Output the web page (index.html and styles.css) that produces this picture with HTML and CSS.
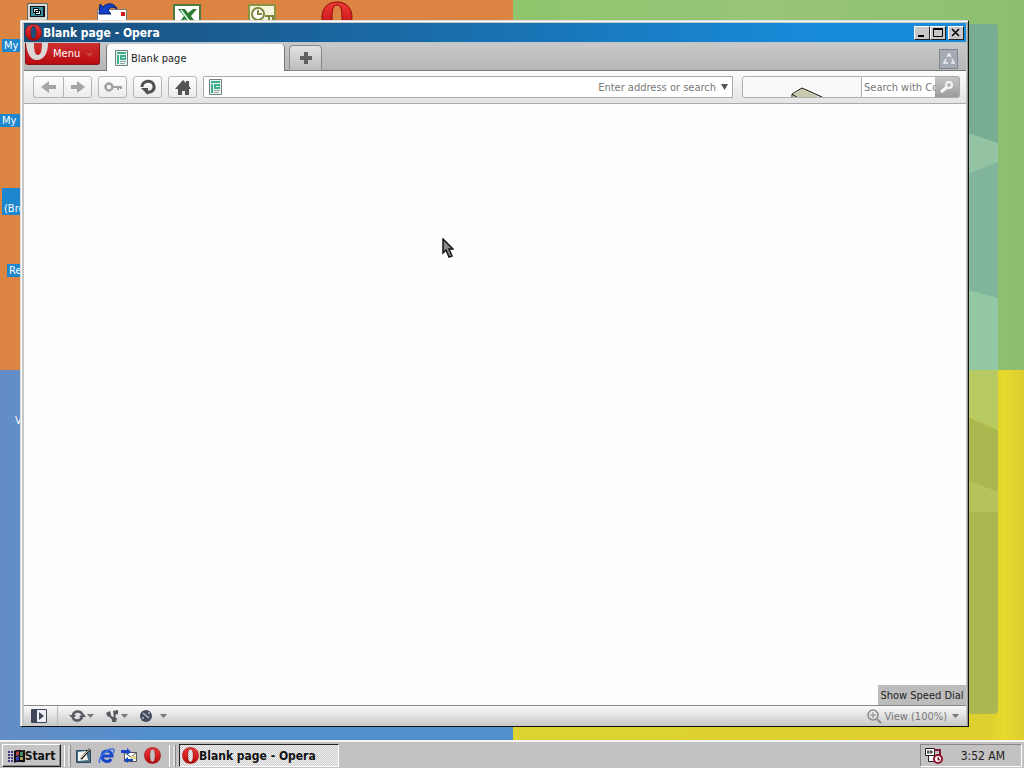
FILE: index.html
```
<!DOCTYPE html>
<html lang="en">
<head>
  <meta charset="UTF-8" />
  <meta name="viewport" content="width=device-width, initial-scale=1.0" />
  <title>Blank page - Opera</title>
  <link rel="stylesheet" href="styles.css">
</head>
<body>
  <!-- shared symbols -->
  <svg class="symbols" aria-hidden="true">
    <defs>
      <linearGradient id="redO" x1="0" y1="0" x2="0" y2="1">
        <stop offset="0" stop-color="#f03a3a" />
        <stop offset="1" stop-color="#b80808" />
      </linearGradient>
    </defs>
    <symbol id="opera" viewBox="0 0 32 32">
      <path fill="url(#redO)" stroke="#8c0808" fill-rule="evenodd" d="M16 1C7 1 1 7 1 16s6 15 15 15 15-6 15-15S25 1 16 1zm0 3c4 0 5 5 5 12s-1 12-5 12-5-5-5-12 1-12 5-12z" />
    </symbol>
    <symbol id="page" viewBox="0 0 13 16">
      <path fill="#e9f5f1" stroke="#71807c" d="M.5.5h12v15H.5z" />
      <path fill="#3fae8f" d="M2 2h9v2H2zM2 5h2v9H2zM5 5h6v5H5z" />
      <path stroke="#d8efe8" d="M7 7.500h3" />
      <path stroke="#8fa8a1" d="M5 11.500h6M5 13.500h5" />
    </symbol>
    <symbol id="caret" viewBox="0 0 7 4"><path fill="currentColor" d="M0 0h7L3.500 4z" /></symbol>
  </svg>

  <main class="desktop">
    <div class="wallpaper">
      <div class="orange"></div>
      <div class="green"></div>
      <div class="blue"></div>
      <div class="yellow"></div>
    </div>
    <div class="glass">
      <svg viewBox="0 0 28 690" preserveAspectRatio="none">
        <path fill="#78ad91" d="M0 0h28v346H0z" />
        <path fill="#94c3a4" d="M0 109l28 10v25L0 170z" />
        <path fill="#82b69c" d="M0 150l28-12v140H0z" />
        <path fill="#94c7a3" d="M0 266l28 8v72H0z" />
        <path fill="#b8cb63" d="M0 346h28v60L0 393z" />
        <path fill="#abb84f" d="M0 393l28 13v284H0z" />
        <path fill="#b7c25a" d="M0 456l28 12v20H0z" />
      </svg>
    </div>

    <div class="icon-row">
      <svg viewBox="0 0 32 22" width="32" height="22">
        <path fill="#d8d8d0" stroke="#666" d="M6.500 2.500h20V21h-20z" /><path fill="#112" d="M9 5h15v11H9z" />
        <path fill="#3f8f9c" d="M10 6h12v9H10z" /><path fill="#dff" stroke="#000" d="M12.500 7.500h5v4h-5zM14.500 9.500h5v4h-5z" />
      </svg>
      <svg viewBox="0 0 32 22" width="32" height="22">
        <path fill="#fff" stroke="#777" d="M1.500 8.500h29V22h-29z" /><path fill="#d01818" d="M25 11h4v4h-4z" />
        <path fill="#1540c8" stroke="#002070" d="M3 13l1-10 3 3c4-5 12-4 14 2-4-3-7-2-9 1l3 4z" />
      </svg>
      <svg viewBox="0 0 32 22" width="32" height="22">
        <path fill="#fff" stroke="#4b7c3c" stroke-width="2" d="M3 4h26v20H3z" />
        <path fill="#2c7a34" d="M7 8h7l3 4 5-4h4l-6 7 6 8h-8l-4-5-4 5H7l6-8z" /><path stroke="#dfe" stroke-width="1.500" d="M10 9l9 12" />
      </svg>
      <svg viewBox="0 0 32 22" width="32" height="22">
        <path fill="#f5f3dc" stroke="#8a9440" stroke-width="2" d="M3 4h26v20H3z" />
        <circle cx="12" cy="13" r="6" fill="#fff" stroke="#7d863c" stroke-width="2" />
        <path fill="none" stroke="#7d863c" stroke-width="2" d="M12 9v4h4M19 15h8v6M23 15v5" />
      </svg>
      <svg viewBox="0 0 32 32" width="32" height="32"><use href="#opera" /></svg>
    </div>

    <span class="label label-docs">My</span>
    <span class="label label-computer">My D</span>
    <span class="label label-network">(Bro</span>
    <span class="label label-recycle">Re</span>
    <span class="label label-media">V</span>

    <section class="window">
      <header class="titlebar">
        <svg width="17" height="17"><use href="#opera" /></svg>
        <h1>Blank page - Opera</h1>
        <div class="window-buttons">
          <button aria-label="Minimize"><svg width="10" height="9"><path d="M1 7h6v2H1z" /></svg></button>
          <button aria-label="Maximize"><svg width="10" height="9"><path fill="none" stroke="#000" d="M.5.5h9v8h-9zM0 1.500h10" /></svg></button>
          <button class="close" aria-label="Close"><svg width="10" height="9"><path stroke="#000" stroke-width="1.500" d="M1 1l7 7M8 1L1 8" /></svg></button>
        </div>
      </header>

      <nav class="tabbar">
        <button class="menu-button">
          <svg width="22" height="18" viewBox="0 0 22 18"><path fill="#dcd8d8" fill-rule="evenodd" d="M0 0h22c0 10-4 17-11 17S1 10 0 0zm8 0c0 8 1 12 4 12s4-5 4-12z" /></svg>
          <span>Menu</span>
          <svg class="menu-caret" width="7" height="4"><use href="#caret" /></svg>
        </button>
        <button class="tab"><svg width="13" height="16"><use href="#page" /></svg>Blank page</button>
        <button class="new-tab" aria-label="New tab"><svg width="12" height="12"><path fill="#606060" d="M4 0h4v4h4v4H8v4H4V8H0V4h4z" /></svg></button>
        <button class="closed-tabs" aria-label="Closed tabs">
          <svg width="12" height="12" fill="none" stroke="#eef0f4" stroke-width="1.500"><path d="M4 4l2-3 2 3M9 6l2 4H8M5 10H1l2-4" /></svg>
        </button>
      </nav>

      <div class="toolbar">
        <div class="pair">
          <button aria-label="Back"><svg width="16" height="14"><path fill="#a5a5a5" d="M0 7l8-6v4h7v4H8v4z" /></svg></button>
          <button aria-label="Forward"><svg width="16" height="14"><path fill="#a5a5a5" d="M15 7L7 1v4H1v4h6v4z" /></svg></button>
        </div>
        <button aria-label="Wand"><svg width="18" height="12"><circle cx="5" cy="6" r="3.500" fill="none" stroke="#a0a0a0" stroke-width="2.500" /><path fill="#a0a0a0" d="M8 5h10v3h-2V7h-1v2h-2V7H8z" /></svg></button>
        <button aria-label="Reload"><svg width="18" height="18"><path fill="none" stroke="#505050" stroke-width="3" d="M3 9c0-7 11-8 12-1 1 5-4 7-8 6" /><path fill="#505050" d="M2 10h7v7z" /></svg></button>
        <button aria-label="Home"><svg width="18" height="17"><path fill="#555" d="M9 1l3 3V2h3v5l2 3h-2v6h-4v-4H8v4H4v-6H1z" /></svg></button>
        <div class="address">
          <svg width="13" height="16"><use href="#page" /></svg>
          <input type="text" aria-label="Address" placeholder="Enter address or search">
          <svg class="drop" width="7" height="6" viewBox="0 0 7 6"><path fill="#555" d="M0 0h7L3.500 6z" /></svg>
        </div>
        <div class="search">
          <div class="widget">
            <svg width="34" height="10"><path fill="#dcdcc4" stroke="#111" d="M2 7L12 1l20 9" /><path fill="#c8c8ae" d="M2 7l10-5 18 9H4z" /><path fill="none" stroke="#111" d="M2 11V7l6 4" /></svg>
          </div>
          <input type="text" aria-label="Search" placeholder="Search with Comcast">
          <button aria-label="Search"><svg width="16" height="16" fill="none" stroke="#f5f5f5" stroke-width="2"><circle cx="10" cy="6" r="3" /><path d="M8 8l-6 5" stroke-width="3" /></svg></button>
        </div>
      </div>

      <div class="page">
        <button class="speed-dial">Show Speed Dial</button>
      </div>

      <footer class="statusbar">
        <button aria-label="Panels"><svg width="16" height="14"><path fill="#eef0f5" stroke="#3f465a" d="M.5.5h15v13H.5z" /><path fill="#3f465a" d="M1 1h5v12H1zM8 3l5 4-5 4z" /></svg></button>
        <span class="divider"></span>
        <button aria-label="Synchronize"><svg width="17" height="14"><path fill="none" stroke="#55585f" stroke-width="2.500" d="M4 6c1-4 7-5 9-1M13 8c-1 4-7 5-9 1" /><path fill="#55585f" d="M0 6h7l-3 4zM10 8h7l-3-4z" /></svg><svg width="7" height="4"><use href="#caret" /></svg></button>
        <button aria-label="Unite"><svg width="15" height="14"><path stroke="#55585f" stroke-width="2" fill="none" d="M3 5l6 6 1-8" /><path fill="#55585f" d="M1 4l4-2 1 4-3 2zM8 2l5-1v4l-4 1zM7 8l5 1-1 4H7z" /></svg><svg width="7" height="4"><use href="#caret" /></svg></button>
        <button class="turbo" aria-label="Turbo"><svg width="14" height="14"><circle cx="7" cy="7" r="6" fill="#454a5c" /><path stroke="#b9bdc9" stroke-width="1.500" d="M4 4l6 5M3 9h2M9 4h2" /></svg><svg width="7" height="4"><use href="#caret" /></svg></button>
        <button class="view"><svg width="15" height="15" fill="none" stroke="#8a8a8a"><circle cx="6" cy="6" r="5" stroke-width="1.500" /><path stroke-width="2" d="M10 10l4 4" /><path d="M3 6h6M6 3v6" /></svg>View (100%)<svg width="7" height="4"><use href="#caret" /></svg></button>
      </footer>
    </section>

    <svg class="cursor" width="12" height="20" viewBox="0 0 12 20"><path fill="#8a8a8a" stroke="#161616" stroke-width="1.500" d="M1 1v14l3-3 3 7 3-1-3-7h4z" /></svg>
  </main>

  <footer class="taskbar">
    <button class="start">
      <svg width="17" height="16"><path fill="#111" d="M6 3c3-2 6 0 11-1v12c-4 1-7-1-11 1z" /><path fill="#b04848" d="M8 4l3-1v4l-3 1z" /><path fill="#4c8c62" d="M12 4h3v4h-3z" /><path fill="#4444b8" d="M8 9l3-1v4l-3 1z" /><path fill="#a8a060" d="M12 9h3v3h-3z" /><path stroke="#44398a" stroke-width="2" stroke-dasharray="2 1" d="M0 4h6M0 7h6M0 10h6M0 13h6" /></svg>
      Start
    </button>
    <span class="grip"></span>
    <div class="quick-launch">
      <button aria-label="Show Desktop"><svg width="17" height="16"><path fill="#4d6f84" stroke="#274a66" d="M1.500 2.500h14v12h-14z" /><path fill="#f0f4ee" d="M3 4l8-1 2 9-10 1z" /><path stroke="#222" stroke-width="2" d="M6 11L15 1" /><path stroke="#ddc890" d="M6 10l9-9" /></svg></button>
      <button aria-label="Internet Explorer"><svg width="17" height="16"><path fill="none" stroke="#1746c8" stroke-width="3" d="M4 8h10c0-6-9-7-10 0 0 6 7 7 9 3" /><path fill="none" stroke="#3a70e8" stroke-width="1.500" d="M2 15C-1 11 9 0 15 1c2 1 1 3 0 4" /></svg></button>
      <button aria-label="Outlook Express"><svg width="17" height="16"><path fill="#fff" stroke="#555" d="M3.500 4.500h12v9h-12z" /><path fill="none" stroke="#555" d="M4 5l6 4 5-4" /><path fill="#1746c8" d="M0 2h6V0l4 4-4 3V5H0zM7 15l-4-3 4-3v2h5v2H7z" /><path fill="#e8d98a" d="M10 8h5v3h-5z" /></svg></button>
      <button aria-label="Opera"><svg width="17" height="17"><use href="#opera" /></svg></button>
    </div>
    <span class="grip"></span>
    <button class="task"><svg width="17" height="17"><use href="#opera" /></svg>Blank page - Opera</button>
    <div class="tray">
      <svg width="18" height="18"><path fill="#fff" stroke="#222" d="M.5 1.500h9v7h-9zM3.500 8.500h7v6h-7z" /><path stroke="#222" d="M3 3v4M6 3v4M2 5h6" /><path fill="none" stroke="#7c1830" stroke-width="2" d="M9 3h6v6" /><circle cx="13" cy="12" r="4" fill="#fff" stroke="#90152b" stroke-width="2" /><path stroke="#90152b" d="M13 10v3h2" /></svg>
      <time>3:52 AM</time>
    </div>
  </footer>
</body>
</html>
```
FILE: styles.css
```
* {
  box-sizing: border-box;
}

html, body {
  margin: 0;
  height: 100%;
  overflow: hidden;
}

body {
  display: flex;
  flex-direction: column;
  font-family: "DejaVu Sans Condensed", "DejaVu Sans", Tahoma, sans-serif;
  font-stretch: condensed;
  font-size: 11px;
  color: #222;
}

button, input {
  font: inherit;
  color: inherit;
  margin: 0;
  padding: 0;
  border: 0;
  background: none;
}

button {
  display: flex;
  align-items: center;
  justify-content: center;
  flex: none;
  white-space: nowrap;
}

svg {
  display: block;
  flex: none;
}

.symbols {
  position: absolute;
  width: 0;
  height: 0;
}

/* desktop */
.desktop {
  flex: 1;
  position: relative;
  overflow: hidden;
}

.wallpaper {
  height: 100%;
  display: grid;
  grid-template: 1fr 1fr / 513fr 511fr;
}

.orange { background: #dc8441; }
.green { background: linear-gradient(90deg, #8fc56d, #98c478 50%, #8dbf70); }
.blue { background: linear-gradient(90deg, #648dc6, #528fcd 30%); }
.yellow { background: linear-gradient(90deg, #dfd334, #dccf2e 93%, #e6da2c 96%, #dccd2d); }

.glass {
  position: absolute;
  top: 24px;
  right: 26px;
  bottom: 26px;
  width: 30px;
}

.glass svg {
  width: 100%;
  height: 100%;
  border-radius: 4px;
}

.icon-row {
  position: absolute;
  top: 1px;
  left: 0;
  display: flex;
}

.icon-row svg {
  margin: 0 22px 0 21px;
}

.label {
  position: absolute;
  padding: 0 2px;
  line-height: 13px;
  color: #fff;
  background: #1c86cf;
}

.label-docs { left: 2px; top: 39px; }
.label-computer { left: 0; top: 114px; }
.label-network { left: 2px; top: 188px; padding-top: 14px; }
.label-recycle { left: 7px; top: 264px; }
.label-media { left: 13px; top: 414px; background: none; }

/* browser window */
.window {
  position: absolute;
  top: 20px;
  left: 20px;
  right: 55px;
  bottom: 13px;
  display: flex;
  flex-direction: column;
  padding: 2px 2px 0 3px;
  background: #c6c6c6;
  border: 1px solid;
  border-color: #dcdcdc #111 #111 #dcdcdc;
  box-shadow: inset 1px 1px #fff, inset -1px 0 #999;
}

.titlebar {
  display: flex;
  align-items: center;
  height: 20px;
  flex: none;
  padding: 0 2px 0 1px;
  background: linear-gradient(90deg, #1a4f7c, #1a6aa6 40%, #188cdb 85%);
  border-bottom: 1px solid #b8c4ce;
}

.titlebar h1 {
  flex: 1;
  margin: 0;
  padding-left: 1px;
  font-size: 12px;
  color: #fff;
}

.window-buttons {
  display: flex;
}

.window-buttons button {
  width: 16px;
  height: 14px;
  background: #c8c8c8;
  border: 1px solid;
  border-color: #fff #222 #222 #fff;
}

.window-buttons .close {
  margin-left: 2px;
}

.tabbar {
  display: flex;
  align-items: flex-start;
  height: 28px;
  flex: none;
  padding: 0 8px 0 1px;
  background: linear-gradient(#c9c9c9, #b6b6b6);
  border-bottom: 1px solid #777;
}

.menu-button {
  width: 75px;
  height: 22px;
  align-items: flex-start;
  justify-content: flex-start;
  color: #fff;
  background: linear-gradient(#cf3030, #b80b10);
  border: 1px solid #8a1515;
  border-top: 0;
  border-radius: 0 0 3px 3px;
  line-height: 22px;
}

.menu-button span {
  padding: 0 6px 0 5px;
}

.menu-caret {
  margin-top: 10px;
  color: #cc4646;
}

.tab {
  width: 179px;
  height: 28px;
  margin: 1px 4px 0 6px;
  padding-left: 8px;
  gap: 3px;
  justify-content: flex-start;
  background: #fcfcfc;
  border: 1px solid #777;
  border-width: 0 1px;
  border-radius: 4px 4px 0 0;
}

.new-tab {
  width: 33px;
  height: 26px;
  margin-top: 2px;
  background: linear-gradient(#e2e2e2, #bcbcbc);
  border: 1px solid #888;
  border-radius: 4px 4px 0 0;
}

.closed-tabs {
  width: 19px;
  height: 20px;
  margin: 6px 0 0 auto;
  background: #a6aab2;
  border: 1px solid #808691;
}

.toolbar {
  display: flex;
  align-items: center;
  gap: 6px;
  height: 33px;
  flex: none;
  padding: 0 6px 0 9px;
  background: linear-gradient(#fcfcfc, #e4e4e4);
  border-bottom: 1px solid #aaa;
}

.toolbar button {
  width: 29px;
  height: 22px;
  background: linear-gradient(#fefefe, #ebebeb);
  border: 1px solid #b5b5b5;
  border-radius: 3px;
}

.pair {
  display: flex;
}

.toolbar .pair button:first-child {
  width: 30px;
  border-right: 0;
  border-radius: 3px 0 0 3px;
}

.toolbar .pair button:last-child {
  border-radius: 0 3px 3px 0;
}

.address {
  flex: 1;
  display: flex;
  align-items: center;
  height: 22px;
  padding: 0 4px 0 5px;
  background: #fff;
  border: 1px solid #aaa;
  border-radius: 2px 0 0 2px;
}

.address input {
  flex: 1;
  min-width: 0;
  text-align: right;
  padding-right: 5px;
}

input::placeholder {
  color: #777;
  opacity: 1;
}

.search {
  display: flex;
  width: 218px;
  height: 22px;
  margin-left: 3px;
}

.widget {
  width: 120px;
  display: flex;
  align-items: flex-end;
  justify-content: center;
  padding-left: 9px;
  background: #f9f9f9;
  border: 1px solid #b0b0b0;
  border-radius: 3px 0 0 3px;
}

.search input {
  flex: 1;
  min-width: 0;
  padding-left: 2px;
  background: #fff;
  border: 1px solid #b0b0b0;
  border-width: 1px 0;
}

.search button {
  width: 25px;
  background: linear-gradient(#c6c6c6, #9b9b9b);
  border-color: #aaa;
  border-left: 0;
  border-radius: 0 3px 3px 0;
}

.page {
  flex: 1;
  position: relative;
  background: #fefefe;
}

.speed-dial {
  position: absolute;
  right: 0;
  bottom: 0;
  height: 20px;
  width: 88px;
  background: #bcbcbc;
}

.statusbar {
  display: flex;
  align-items: center;
  height: 21px;
  flex: none;
  padding: 0 7px;
  color: #777;
  background: linear-gradient(#fafafa, #c8c8c8);
  border-top: 1px solid #8a8a8a;
}

.divider {
  width: 1px;
  height: 100%;
  margin: 0 11px 0 10px;
  background: #bbb;
}

.statusbar button {
  gap: 1px;
}

.statusbar button + button {
  margin-left: 11px;
}

.statusbar .turbo {
  gap: 7px;
}

.statusbar .view {
  margin-left: auto;
  gap: 2px;
}

.statusbar .view svg:last-child {
  margin-left: 3px;
}

.cursor {
  position: absolute;
  left: 442px;
  top: 238px;
}

/* taskbar */
.taskbar {
  display: flex;
  align-items: center;
  height: 28px;
  flex: none;
  padding: 1px 2px 0;
  background: #c3c1c1;
  border-top: 2px solid #f4f4f4;
}

.start, .task {
  height: 23px;
  font-size: 12px;
  font-weight: bold;
  color: #111;
}

.start {
  width: 59px;
  background: #c6c4c4;
  border: 1px solid;
  border-color: #fff #222 #222 #fff;
  box-shadow: inset -1px -1px #888;
}

.grip {
  width: 6px;
  height: 22px;
  margin: 0 4px 0 3px;
  border: 1px solid #fff;
  border-width: 0 2px 0 1px;
  border-right-color: #ddd;
  box-shadow: 1px 0 #888;
}

.quick-launch {
  display: flex;
  gap: 6px;
  margin: 0 5px 0 1px;
}

.task {
  width: 160px;
  justify-content: flex-start;
  padding-left: 2px;
  border: 1px solid;
  border-color: #222 #fff #fff #222;
  background: repeating-conic-gradient(#f2f2f2 0 25%, #cbcbcb 0 50%) 0 0 / 2px 2px;
}

.tray {
  display: flex;
  align-items: center;
  justify-content: space-between;
  width: 102px;
  height: 23px;
  margin-left: auto;
  padding: 0 16px 0 4px;
  border: 1px solid;
  border-color: #888 #fff #fff #888;
  font-size: 12px;
}
```
